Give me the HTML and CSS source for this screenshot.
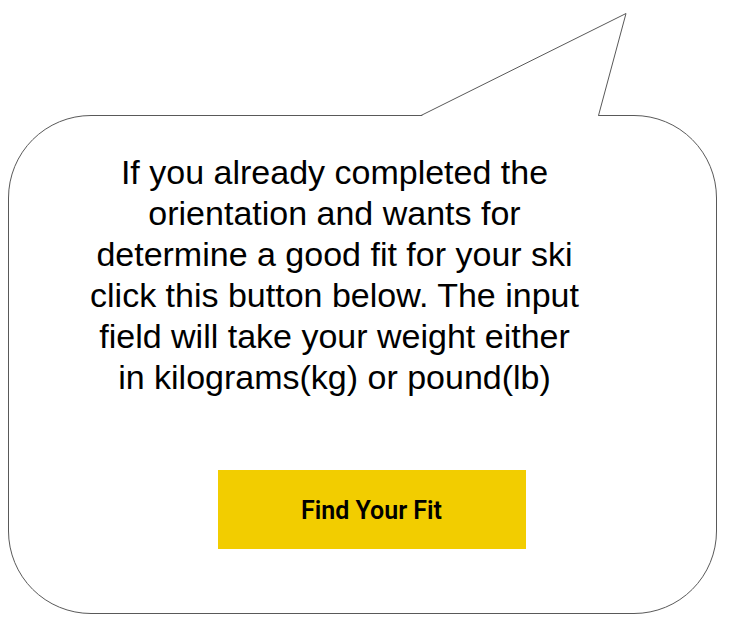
FILE: index.html
```html
<!DOCTYPE html>
<html lang="en">
<head>
<meta charset="utf-8">
<meta name="viewport" content="width=device-width, initial-scale=1">
<title>Find Your Fit</title>
<link rel="stylesheet" href="styles.css">
</head>
<body>
<main class="page">
  <section class="bubble">
    <svg class="tail" viewBox="0 0 206 105" width="206" height="105" aria-hidden="true">
      <path class="tail-fill" d="M1 103.500 L205 1 L177.500 103.500 V105 H1 Z"/>
      <path class="tail-line" d="M0 103.500 L205 1.500 L177.500 103.500 H180"/>
    </svg>
    <p class="message">If you already completed the orientation and wants for determine a good fit for your ski click this button below. The input field will take your weight either in kilograms(kg) or pound(lb)</p>
    <button class="cta" type="button">Find Your Fit</button>
  </section>
</main>
</body>
</html>
```
FILE: styles.css
```css
* {
  box-sizing: border-box;
}

body {
  margin: 0;
  background: #fff;
  color: #000;
  font-family: "Liberation Sans", Arial, sans-serif;
}

.page {
  padding: 115px 15px 3px 8px;
}

.bubble {
  position: relative;
  display: flex;
  flex-direction: column;
  align-items: center;
  padding: 36px 24px 64px;
  border: 1px solid #595959;
  border-radius: 83px;
}

.tail {
  position: absolute;
  right: 89px;
  bottom: 100%;
  margin-bottom: -1px;
}

.tail-fill {
  fill: #fff;
}

.tail-line {
  fill: none;
  stroke: #595959;
  stroke-width: 1;
}

.message {
  width: 100%;
  max-width: 500px;
  margin: 0 56px 72px 0;
  font-size: 34px;
  line-height: 41px;
  text-align: center;
}

.cta {
  width: 308px;
  height: 79px;
  margin-left: 18px;
  padding: 2px 0 0;
  border: 0;
  background: #f2cd00;
  color: #000;
  font: 600 25px/32px Roboto, sans-serif;
}
```
